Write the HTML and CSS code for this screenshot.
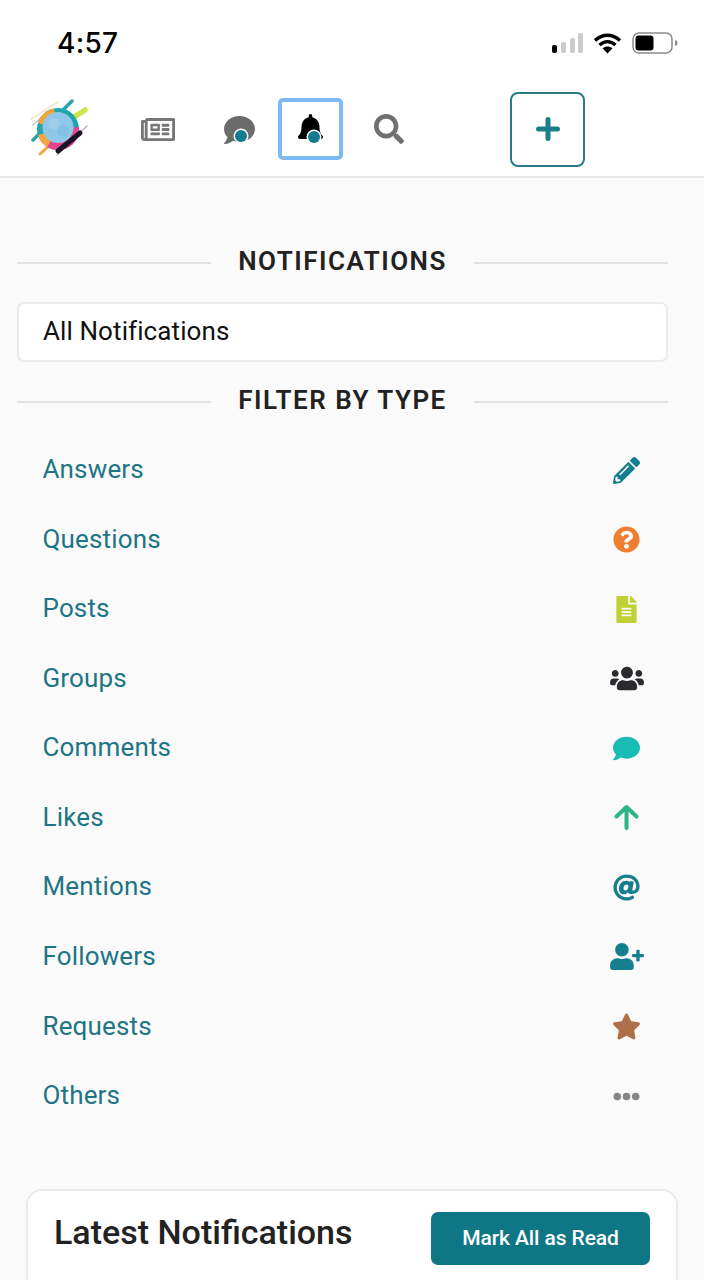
FILE: index.html
```html
<!DOCTYPE html>
<html lang="en">
<head>
<meta charset="utf-8">
<title>Notifications</title>
<link rel="stylesheet" href="styles.css">
</head>
<body>
<div class="status">
  <span class="time">4:57</span>
  <div class="status-icons">
    <svg class="signal" width="32" height="22" viewBox="-1 0 32 22"><rect x="0" y="13" width="5" height="8" rx="2" fill="#000"/><rect x="9" y="10" width="5" height="11" rx="1.5" fill="#ccc"/><rect x="18" y="6" width="5" height="15" rx="1.5" fill="#ccc"/><rect x="26" y="1" width="5" height="20" rx="1.5" fill="#ccc"/></svg>
    <svg class="wifi" width="29" height="22" viewBox="0 0 29 22"><path d="M2 8.500C9.500 1.500 19.500 1.500 27 8.500M6.500 13C11.500 8.500 17.500 8.500 22.500 13" fill="none" stroke="#000" stroke-width="3.400"/><path d="M14.500 21.500L9.700 16.400C12.500 14 16.500 14 19.300 16.400Z" fill="#000"/></svg>
    <svg class="battery" width="46" height="22" viewBox="0 0 46 22"><rect x="1" y="1" width="39" height="20" rx="6" fill="none" stroke="#8a8a8a" stroke-width="1.500"/><rect x="3.500" y="3.500" width="18" height="15" rx="3" fill="#000"/><path d="M43 8c1.800.5 2.500 1.700 2.500 3s-.7 2.500-2.500 3z" fill="#8a8a8a"/></svg>
  </div>
</div>

<header class="topbar">
  <svg class="logo" width="60" height="60" viewBox="0 0 60 60">
    <g stroke-linecap="round" fill="none">
      <path d="M3 20L30 3" stroke="#f0e6c8" stroke-width="1.500"/>
      <path d="M5 26L18 14" stroke="#c6c1cd" stroke-width="1.500"/>
      <path d="M5 41L44 2" stroke="#2aa2ac" stroke-width="3.500"/>
      <path d="M43 20L57 11" stroke="#cfe34b" stroke-width="5.500"/>
      <path d="M12 55L21 47" stroke="#f2a53a" stroke-width="3"/>
      <path d="M29 56L59 27" stroke="#cda5d8" stroke-width="1.500"/>
    </g>
    <circle cx="30" cy="30" r="21" fill="#1fa5ad"/>
    <path d="M10 24A21 21 0 0 1 26 9.400L30 30Z" fill="#f3a73a"/>
    <path d="M51 28A21 21 0 0 1 17 46.500L30 30Z" fill="#e5458f"/>
    <path d="M10 36A21 21 0 0 0 19 48L30 30Z" fill="#f3a73a"/>
    <path d="M30 52L52 34" stroke="#1b1426" stroke-width="5" stroke-linecap="round"/>
    <circle cx="30" cy="28.500" r="15.500" fill="#8fc7e8"/>
    <circle cx="26" cy="25" r="6" fill="#9ccde9"/>
    <circle cx="35" cy="32" r="6" fill="#84c0e4"/>
  </svg>

  <a class="nav-item news">
    <svg width="34" height="23" viewBox="0 64 576 384" preserveAspectRatio="none"><path fill="#777" d="M552 64H112c-20.858 0-38.643 13.377-45.248 32H24c-13.255 0-24 10.745-24 24v272c0 30.928 25.072 56 56 56h496c13.255 0 24-10.745 24-24V88c0-13.255-10.745-24-24-24zM48 392V144h16v248c0 4.411-3.589 8-8 8s-8-3.589-8-8zm480 8H111.422c.374-2.614.578-5.283.578-8V112h416v288zM172 280h136c6.627 0 12-5.373 12-12v-96c0-6.627-5.373-12-12-12H172c-6.627 0-12 5.373-12 12v96c0 6.627 5.373 12 12 12zm28-80h80v40h-80v-40zm-40 140v-24c0-6.627 5.373-12 12-12h136c6.627 0 12 5.373 12 12v24c0 6.627-5.373 12-12 12H172c-6.627 0-12-5.373-12-12zm192 0v-24c0-6.627 5.373-12 12-12h104c6.627 0 12 5.373 12 12v24c0 6.627-5.373 12-12 12H364c-6.627 0-12-5.373-12-12zm0-144v-24c0-6.627 5.373-12 12-12h104c6.627 0 12 5.373 12 12v24c0 6.627-5.373 12-12 12H364c-6.627 0-12-5.373-12-12zm0 72v-24c0-6.627 5.373-12 12-12h104c6.627 0 12 5.373 12 12v24c0 6.627-5.373 12-12 12H364c-6.627 0-12-5.373-12-12z"/></svg>
  </a>

  <a class="nav-item chat">
    <svg width="31" height="28" viewBox="0 32 512 448" preserveAspectRatio="none"><path fill="#6b6b6b" d="M256 32C114.600 32 0 125.100 0 240c0 49.600 21.400 95 57 130.700C44.500 421.100 2.700 466 2.200 466.500c-2.200 2.300-2.800 5.700-1.500 8.700S4.800 480 8 480c66.300 0 116-31.800 140.600-51.400 32.700 12.300 69 19.400 107.400 19.400 141.400 0 256-93.100 256-208S397.400 32 256 32z"/></svg>
    <span class="dot chat-dot"></span>
  </a>

  <a class="nav-item bell-box">
    <svg width="25" height="25" viewBox="0 0 448 416" preserveAspectRatio="none"><path fill="#000" d="M439.390 362.290c-19.320-20.760-55.470-51.990-55.470-154.290 0-77.700-54.480-139.900-127.940-155.160V32c0-17.670-14.320-32-31.980-32s-31.980 14.330-31.980 32v20.840C118.560 68.100 64.080 130.300 64.080 208c0 102.300-36.150 133.530-55.470 154.290-6 6.450-8.660 14.160-8.610 21.710.11 16.400 12.980 32 32.100 32h383.800c19.120 0 32-15.600 32.100-32 .05-7.550-2.610-15.260-8.610-21.710z"/></svg>
    <span class="dot bell-dot"></span>
  </a>

  <a class="nav-item search">
    <svg width="30" height="30" viewBox="0 0 512 512"><path fill="#707070" d="M505 442.700L405.300 343c-4.500-4.500-10.600-7-17-7H372c27.600-35.300 44-79.700 44-128C416 93.100 322.900 0 208 0S0 93.100 0 208s93.100 208 208 208c48.300 0 92.700-16.400 128-44v16.300c0 6.400 2.500 12.500 7 17l99.700 99.700c9.400 9.400 24.600 9.400 33.900 0l28.300-28.300c9.400-9.400 9.400-24.600.1-34zM208 336c-70.700 0-128-57.200-128-128 0-70.700 57.200-128 128-128 70.700 0 128 57.200 128 128 0 70.700-57.200 128-128 128z"/></svg>
  </a>

  <button class="add-btn" type="button">
    <svg width="24" height="24" viewBox="0 0 24 24"><path d="M12 2.500v19M2.500 12h19" stroke="#1d7f8e" stroke-width="5" stroke-linecap="round"/></svg>
  </button>
</header>

<main class="content">
  <div class="divider first"><h2>NOTIFICATIONS</h2></div>
  <div class="select">All Notifications</div>
  <div class="divider second"><h2>FILTER BY TYPE</h2></div>

  <ul class="filters">
    <li><span>Answers</span><i class="ico"><svg width="27" height="27" viewBox="0 0 512 512"><path fill="#157f90" d="M497.900 142.100l-46.100 46.100c-4.700 4.700-12.300 4.700-17 0l-111-111c-4.700-4.700-4.700-12.300 0-17l46.100-46.100c18.700-18.700 49.100-18.700 67.900 0l60.100 60.100c18.800 18.700 18.800 49.100 0 67.900zM284.200 99.800L21.600 362.400.4 483.900c-2.900 16.400 11.400 30.600 27.800 27.800l121.500-21.300 262.600-262.600c4.700-4.700 4.700-12.300 0-17l-111-111c-4.800-4.700-12.400-4.700-17.100 0zM124.100 339.900c-5.500-5.500-5.500-14.300 0-19.800l154-154c5.500-5.500 14.300-5.500 19.800 0s5.500 14.300 0 19.800l-154 154c-5.500 5.500-14.300 5.500-19.800 0zM88 424h48v36.300l-64.500 11.300-31.100-31.100L51.700 376H88v48z"/></svg></i></li>
    <li><span>Questions</span><i class="ico"><svg width="27" height="27" viewBox="0 0 512 512"><path fill="#ef7d32" d="M504 256c0 136.997-111.043 248-248 248S8 392.997 8 256C8 119.083 119.043 8 256 8s248 111.083 248 248zM262.655 90c-54.497 0-89.255 22.957-116.549 63.758-3.536 5.286-2.353 12.415 2.715 16.258l34.699 26.310c5.205 3.947 12.621 3.008 16.665-2.122 17.864-22.658 30.113-35.797 57.303-35.797 20.429 0 45.698 13.148 45.698 32.958 0 14.976-12.363 22.667-32.534 33.976C247.128 238.528 216 254.941 216 296v4c0 6.627 5.373 12 12 12h56c6.627 0 12-5.373 12-12v-1.333c0-28.462 83.186-29.647 83.186-106.667 0-58.002-60.165-102-116.531-102zM256 338c-25.365 0-46 20.635-46 46 0 25.364 20.635 46 46 46s46-20.636 46-46c0-25.365-20.635-46-46-46z"/></svg></i></li>
    <li><span>Posts</span><i class="ico"><svg width="21" height="27" viewBox="0 0 384 512"><path fill="#bfd134" d="M224 136V0H24C10.700 0 0 10.700 0 24v464c0 13.300 10.700 24 24 24h336c13.300 0 24-10.700 24-24V160H248c-13.200 0-24-10.800-24-24zm64 236c0 6.600-5.400 12-12 12H108c-6.600 0-12-5.400-12-12v-8c0-6.600 5.400-12 12-12h168c6.600 0 12 5.400 12 12v8zm0-64c0 6.600-5.400 12-12 12H108c-6.600 0-12-5.400-12-12v-8c0-6.600 5.400-12 12-12h168c6.600 0 12 5.400 12 12v8zm0-72v8c0 6.600-5.400 12-12 12H108c-6.600 0-12-5.400-12-12v-8c0-6.600 5.400-12 12-12h168c6.600 0 12 5.400 12 12zm96-114.100v6.100H256V0h6.100c6.400 0 12.500 2.500 17 7l97.900 98c4.500 4.500 7 10.600 7 16.900z"/></svg></i></li>
    <li><span>Groups</span><i class="ico"><svg class="wide" width="34" height="27" viewBox="0 0 640 512"><path fill="#2b2b2f" d="M96 224c35.300 0 64-28.700 64-64s-28.700-64-64-64-64 28.700-64 64 28.700 64 64 64zm448 0c35.300 0 64-28.700 64-64s-28.700-64-64-64-64 28.700-64 64 28.700 64 64 64zm32 32h-64c-17.600 0-33.500 7.100-45.100 18.600 40.300 22.100 68.900 62 75.100 109.400h66c17.700 0 32-14.300 32-32v-32c0-35.300-28.700-64-64-64zm-256 0c61.900 0 112-50.100 112-112S381.900 32 320 32 208 82.100 208 144s50.100 112 112 112zm76.800 32h-8.300c-20.800 10-43.900 16-68.500 16s-47.600-6-68.500-16h-8.300C179.600 288 128 339.600 128 403.200V432c0 26.500 21.500 48 48 48h288c26.500 0 48-21.500 48-48v-28.800c0-63.600-51.600-115.200-115.200-115.200zm-223.700-13.400C161.500 263.100 145.600 256 128 256H64c-35.300 0-64 28.700-64 64v32c0 17.700 14.300 32 32 32h65.900c6.300-47.400 34.900-87.300 75.200-109.400z"/></svg></i></li>
    <li><span>Comments</span><i class="ico"><svg width="27" height="27" viewBox="0 0 512 512"><path fill="#19bcb4" d="M256 32C114.600 32 0 125.100 0 240c0 49.600 21.400 95 57 130.700C44.500 421.100 2.700 466 2.200 466.500c-2.200 2.300-2.800 5.700-1.500 8.700S4.800 480 8 480c66.300 0 116-31.800 140.600-51.400 32.700 12.300 69 19.400 107.400 19.400 141.400 0 256-93.100 256-208S397.400 32 256 32z"/></svg></i></li>
    <li><span>Likes</span><i class="ico"><svg width="27" height="27" viewBox="0 0 27 27"><path d="M13.500 24V3.500M3.500 12.500L13.500 3l10 9.500" fill="none" stroke="#2cb685" stroke-width="4" stroke-linecap="round" stroke-linejoin="round"/></svg></i></li>
    <li><span>Mentions</span><i class="ico"><svg width="27" height="27" viewBox="0 0 512 512"><path fill="#157f90" d="M256 8C118.941 8 8 118.919 8 256c0 137.059 110.919 248 248 248 48.154 0 95.342-14.140 135.408-40.223 12.005-7.815 14.625-24.288 5.552-35.372l-10.177-12.433c-7.671-9.371-21.179-11.667-31.373-5.129C325.920 429.757 291.314 440 256 440c-101.458 0-184-82.542-184-184S154.542 72 256 72c100.139 0 184 57.619 184 160 0 38.786-21.093 79.742-58.170 83.693-17.349-.454-16.910-12.857-13.476-30.024l23.433-121.110C394.653 149.750 383.308 136 368.225 136h-44.981a13.518 13.518 0 0 0-13.432 11.993l-.01.092c-14.697-17.901-40.448-21.775-59.971-21.775-74.580 0-137.831 62.234-137.831 151.460 0 65.303 36.785 105.870 96 105.870 26.984 0 57.369-15.637 74.991-38.333 9.522 34.104 40.613 34.103 70.710 34.103C462.609 379.410 504 307.798 504 232 504 95.653 394.023 8 256 8zm-21.680 304.430c-22.249 0-36.070-15.623-36.070-40.771 0-44.993 30.779-72.729 58.630-72.729 22.292 0 35.601 15.241 35.601 40.770 0 45.061-33.875 72.730-58.161 72.730z"/></svg></i></li>
    <li><span>Followers</span><i class="ico"><svg class="wide" width="34" height="27" viewBox="0 0 640 512"><path fill="#157f90" d="M624 208h-64v-64c0-8.800-7.200-16-16-16h-32c-8.800 0-16 7.200-16 16v64h-64c-8.800 0-16 7.200-16 16v32c0 8.800 7.200 16 16 16h64v64c0 8.800 7.200 16 16 16h32c8.800 0 16-7.200 16-16v-64h64c8.800 0 16-7.200 16-16v-32c0-8.800-7.200-16-16-16zm-400 48c70.700 0 128-57.300 128-128S294.700 0 224 0 96 57.300 96 128s57.300 128 128 128zm89.600 32h-16.700c-22.200 10.200-46.900 16-72.900 16s-50.600-5.800-72.900-16h-16.700C60.200 288 0 348.200 0 422.400V464c0 26.500 21.500 48 48 48h352c26.500 0 48-21.500 48-48v-41.600c0-74.200-60.200-134.400-134.400-134.400z"/></svg></i></li>
    <li><span>Requests</span><i class="ico"><svg width="29" height="27" viewBox="0 0 576 512"><path fill="#ad704a" d="M259.300 17.800L194 150.200 47.900 171.500c-26.200 3.800-36.700 36.100-17.700 54.600l105.700 103-25 145.500c-4.500 26.300 23.200 46 46.400 33.700L288 439.600l130.700 68.700c23.200 12.200 50.900-7.400 46.400-33.700l-25-145.500 105.700-103c19-18.500 8.500-50.800-17.700-54.600L382 150.200 316.700 17.800c-11.700-23.600-45.600-23.900-57.400 0z"/></svg></i></li>
    <li><span>Others</span><i class="ico"><svg width="27" height="9" viewBox="0 0 27 9"><circle cx="4.300" cy="4.500" r="3.800" fill="#858585"/><circle cx="13.500" cy="4.500" r="3.800" fill="#858585"/><circle cx="22.700" cy="4.500" r="3.800" fill="#858585"/></svg></i></li>
  </ul>

  <section class="card">
    <h1>Latest Notifications</h1>
    <button class="mark" type="button">Mark All as Read</button>
  </section>
</main>
</body>
</html>
```

FILE: styles.css
```css
* { box-sizing: border-box; }

html, body {
  margin: 0;
  padding: 0;
  height: 1280px;
  overflow: hidden;
}

body {
  background: #fafafa;
  font-family: Roboto, "Liberation Sans", sans-serif;
  color: #222;
}

.status {
  height: 82px;
  background: #fff;
  display: flex;
  align-items: flex-start;
  justify-content: space-between;
  padding: 0 26px 0 57px;
}

.time {
  font-family: Inter, Roboto, sans-serif;
  font-size: 28px;
  font-weight: 500;
  line-height: 34px;
  margin-top: 26px;
  letter-spacing: 0.3px;
  color: #000;
}

.status-icons {
  display: flex;
  align-items: flex-start;
  gap: 10px;
  margin-top: 32px;
}

.topbar {
  height: 96px;
  background: #fff;
  border-bottom: 2px solid #e8e8e8;
  display: flex;
  align-items: center;
  padding-left: 28px;
}

.logo { flex: none; }

.nav-item {
  position: relative;
  display: flex;
  align-items: center;
  justify-content: center;
  flex: none;
}

.nav-item svg { display: block; }

.news { margin-left: 53px; }
.chat { margin-left: 49px; padding-top: 2px; }

.bell-box {
  width: 65px;
  height: 62px;
  margin-left: 23px;
  padding-bottom: 5px;
  border: 4px solid #7db9f2;
  border-radius: 5px;
}

.search { margin-left: 31px; }

.dot {
  position: absolute;
  width: 12px;
  height: 12px;
  border-radius: 50%;
  background: #127c8e;
  box-shadow: 0 0 0 1.500px #fff;
}

.chat-dot { left: 10.500px; top: 16px; }
.bell-dot { left: 26px; top: 29px; }

.add-btn {
  width: 75px;
  height: 75px;
  margin-left: 106px;
  padding: 0;
  flex: none;
  display: flex;
  align-items: center;
  justify-content: center;
  background: #fff;
  border: 2px solid #2a7b89;
  border-radius: 8px;
}

.content {
  padding: 0 36px 0 17px;
}

.divider {
  display: flex;
  align-items: center;
  gap: 27px;
}

.divider::before,
.divider::after {
  content: "";
  flex: 1;
  height: 2px;
  margin-top: 2px;
  background: #e2e2e2;
}

.divider h2 {
  margin: 0;
  padding-bottom: 2px;
  font-size: 26px;
  line-height: 30px;
  font-weight: 600;
  letter-spacing: 1.500px;
  color: #222;
}

.first { margin-top: 68px; }
.second { margin-top: 23px; }

.select {
  height: 60px;
  margin-top: 24px;
  padding: 0 0 3px 24px;
  display: flex;
  align-items: center;
  background: #fff;
  border: 2px solid #ebebeb;
  border-radius: 7px;
  font-size: 26px;
  letter-spacing: 0.100px;
  color: #111;
}

.filters {
  list-style: none;
  margin: 17.400px 0 0;
  padding: 0 22px 0 25.500px;
}

.filters li {
  height: 69.560px;
  display: flex;
  align-items: center;
  justify-content: space-between;
  font-size: 26px;
  letter-spacing: 0.150px;
  color: #1d7585;
}

.ico {
  width: 40px;
  padding-top: 2px;
  display: flex;
  align-items: center;
  justify-content: center;
  font-style: normal;
}

.ico svg { display: block; }
.ico .wide { margin-left: 2px; }

.card {
  width: 652px;
  height: 200px;
  margin: 59.600px 0 0 9px;
  padding: 22px 26px 0 26px;
  display: flex;
  align-items: flex-start;
  justify-content: space-between;
  background: #fff;
  border: 2px solid #ebebeb;
  border-radius: 16px;
}

.card h1 {
  margin: 0;
  font-size: 34px;
  line-height: 38px;
  font-weight: 500;
  color: #222;
}

.mark {
  width: 219px;
  height: 53px;
  margin-top: -1px;
  padding: 0 0 2px;
  border: 0;
  border-radius: 7px;
  background: #0f7686;
  color: #fff;
  font-family: Roboto, sans-serif;
  font-size: 21px;
  font-weight: 500;
  letter-spacing: -0.100px;
}
```
